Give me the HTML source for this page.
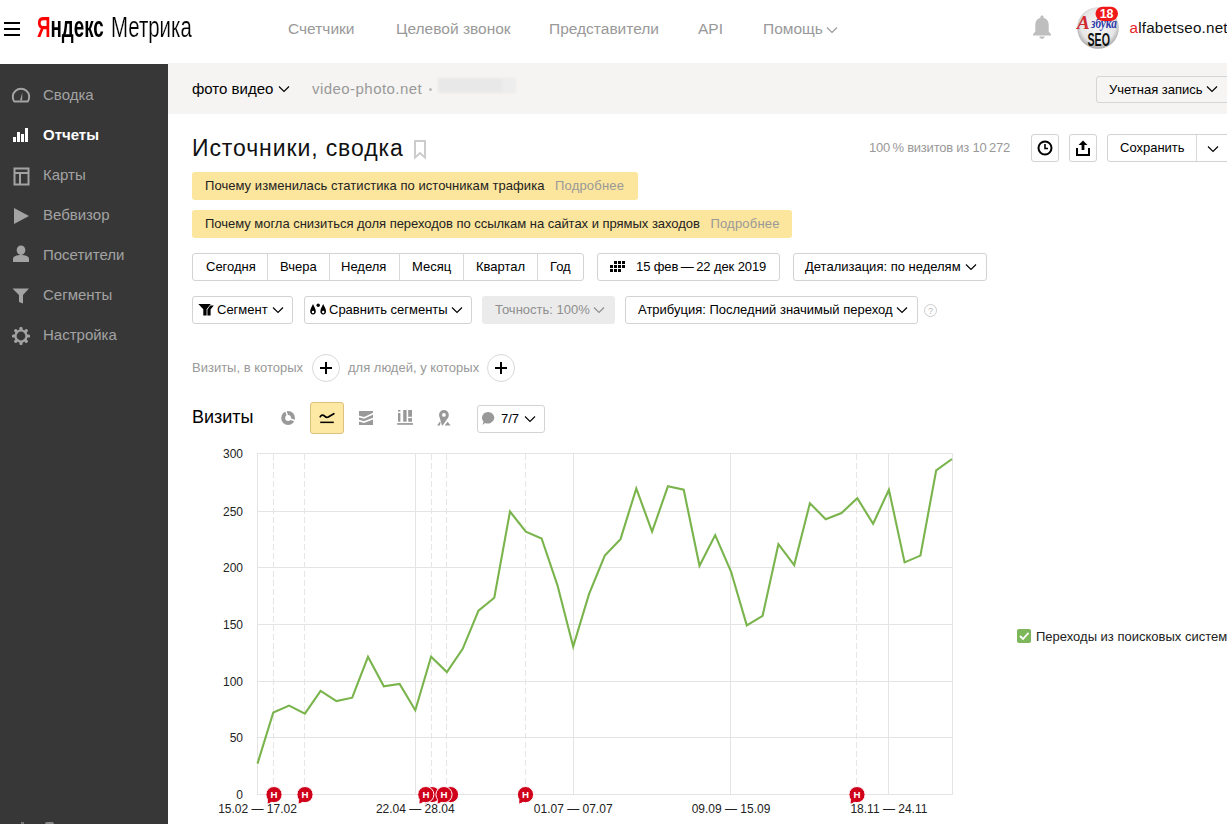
<!DOCTYPE html>
<html><head><meta charset="utf-8">
<style>
*{box-sizing:border-box;margin:0;padding:0}
html,body{width:1227px;height:824px;overflow:hidden;background:#fff;font-family:"Liberation Sans",sans-serif;color:#000}
.a{position:absolute;white-space:nowrap}
#side{position:absolute;left:0;top:64px;width:168px;height:760px;background:#373737}
#band{position:absolute;left:168px;top:63px;width:1059px;height:51px;background:#f5f4f2}
.nav{font-size:15.5px;color:#999;top:20px;letter-spacing:0}
.si{font-size:15px;color:#a3a3a3;left:43px;line-height:17px}
.ban{position:absolute;left:192px;height:28px;background:#fce59c;border-radius:3px;font-size:13px;color:#222;padding-left:13px;line-height:28px;white-space:nowrap;letter-spacing:.05px}
.ban span{color:#999;margin-left:10.5px;letter-spacing:.2px}
.btn{position:absolute;border:1px solid #d3d3d3;border-radius:3px;background:#fff;font-size:13px;color:#000;height:27px;white-space:nowrap}
.t{position:absolute;font-size:13px;line-height:15px;white-space:nowrap}
.chev{position:absolute}
svg{position:absolute;overflow:visible}
</style></head><body>
<!-- header -->
<div class="a" style="left:4px;top:22px;width:16px;height:2px;background:#000"></div>
<div class="a" style="left:4px;top:28px;width:16px;height:2px;background:#000"></div>
<div class="a" style="left:4px;top:34px;width:16px;height:2px;background:#000"></div>
<div class="a" style="left:37px;top:10px;font-size:29px;line-height:34px;font-weight:bold;transform-origin:0 0;transform:scaleX(0.647)"><span style="color:#f00">Я</span>ндекс</div><div class="a" style="left:111px;top:10px;font-size:29px;line-height:34px;transform-origin:0 0;transform:scaleX(0.704);-webkit-text-stroke:0.2px #fff">Метрика</div>
<div class="a nav" style="left:288px">Счетчики</div>
<div class="a nav" style="left:396px">Целевой звонок</div>
<div class="a nav" style="left:549px">Представители</div>
<div class="a nav" style="left:698px">API</div>
<div class="a nav" style="left:763px">Помощь</div>
<svg style="left:826px;top:25.5px" width="12" height="8"><path d="M1 1.5 L6 6.5 L11 1.5" fill="none" stroke="#999" stroke-width="1.15"/></svg>

<!-- bell -->
<svg style="left:1032px;top:14px" width="20" height="26" viewBox="0 0 20 26"><path d="M10 1.5c-1 0-1.6.7-1.6 1.6v.6C5.2 4.5 3.3 7.3 3.3 10.6v6.8L1 20.2v1.3h18v-1.3l-2.3-2.8v-6.8c0-3.3-1.9-6.1-5.1-6.9v-.6c0-.9-.6-1.6-1.6-1.6z" fill="#bebebe"/><path d="M7.2 22.6h5.6c-.3 1.3-1.4 2.3-2.8 2.3s-2.5-1-2.8-2.3z" fill="#bebebe"/></svg>
<!-- avatar -->
<svg style="left:1076px;top:7px" width="44" height="42" viewBox="0 0 44 42">
<defs><radialGradient id="ag" cx="50%" cy="45%" r="55%"><stop offset="0" stop-color="#fafafa"/><stop offset=".75" stop-color="#e6e6e6"/><stop offset="1" stop-color="#a8a8a8"/></radialGradient></defs>
<circle cx="22" cy="21" r="20.8" fill="url(#ag)"/>
<text x="1" y="22" font-family="Liberation Serif" font-style="italic" font-weight="bold" font-size="19" fill="#d02a30">А</text>
<text x="0" y="0" font-family="Liberation Serif" font-style="italic" font-weight="bold" font-size="15" fill="#2c3aa8" transform="translate(15 20.5) scale(0.75 1)">збука</text>
<text x="0" y="0" font-family="Liberation Sans" font-weight="bold" font-size="19" fill="#111" transform="translate(11.5 38.5) scale(0.56 1)">SEO</text>
<rect x="19.5" y="-0.3" width="22.5" height="14.2" rx="7.1" fill="#f01818"/>
<text x="30.6" y="11.3" text-anchor="middle" font-family="Liberation Sans" font-weight="bold" font-size="12.5" fill="#fff">18</text>
</svg>
<div class="a" style="left:1129.5px;top:19px;font-size:15.2px;color:#111;letter-spacing:.2px"><span style="color:#e8232a">a</span>lfabetseo.net</div>

<!-- sidebar -->
<div id="side"></div>
<svg style="left:11px;top:85.5px" width="20" height="17" viewBox="0 0 20 17"><path d="M3.2 15.5 A8.2 8.2 0 1 1 16.8 15.5 Z" fill="none" stroke="#a3a3a3" stroke-width="2" stroke-linejoin="round"/><path d="M9 14.5 L11.3 6.5 L11.2 14.5Z" fill="#a3a3a3"/></svg>
<div class="a si" style="top:86px">Сводка</div>
<svg style="left:13px;top:128px" width="16" height="14"><rect x="0" y="9" width="3" height="5" fill="#fff"/><rect x="4" y="4" width="3" height="10" fill="#fff"/><rect x="8" y="6" width="3" height="8" fill="#fff"/><rect x="12" y="0" width="3" height="14" fill="#fff"/></svg>
<div class="a si" style="top:126px;color:#fff;font-weight:bold">Отчеты</div>
<svg style="left:12.5px;top:166.5px" width="18" height="20"><rect x="1.5" y="1.5" width="14" height="16" fill="none" stroke="#a3a3a3" stroke-width="2"/><rect x="2" y="5" width="13" height="2" fill="#a3a3a3"/><rect x="6" y="6" width="2" height="11" fill="#a3a3a3"/></svg>
<div class="a si" style="top:166px">Карты</div>
<svg style="left:13px;top:207px" width="17" height="18"><path d="M1 1 L16 9 L1 17Z" fill="#a3a3a3"/></svg>
<div class="a si" style="top:206px">Вебвизор</div>
<svg style="left:13px;top:245px" width="17" height="18"><ellipse cx="8" cy="5.2" rx="4.3" ry="4.8" fill="#a3a3a3"/><path d="M0 17 L0 14 C0 11 4 10 8 10 C12 10 16 11 16 14 L16 17Z" fill="#a3a3a3"/></svg>
<div class="a si" style="top:246px">Посетители</div>
<svg style="left:12px;top:288px" width="18" height="16"><path d="M0.5 0.5 L17 0.5 L11 7 L11 15.5 L7 14 L7 7Z" fill="#a3a3a3"/></svg>
<div class="a si" style="top:286px">Сегменты</div>
<svg style="left:11px;top:326px" width="20" height="20" viewBox="0 0 20 20"><g fill="#a3a3a3"><circle cx="10" cy="10" r="6.6"/><g id="tooth"><rect x="8.4" y="1" width="3.2" height="3.6" rx="1.2"/></g><use href="#tooth" transform="rotate(45 10 10)"/><use href="#tooth" transform="rotate(90 10 10)"/><use href="#tooth" transform="rotate(135 10 10)"/><use href="#tooth" transform="rotate(180 10 10)"/><use href="#tooth" transform="rotate(225 10 10)"/><use href="#tooth" transform="rotate(270 10 10)"/><use href="#tooth" transform="rotate(315 10 10)"/></g><circle cx="10" cy="10" r="4.4" fill="#373737"/></svg>
<div class="a si" style="top:326px">Настройка</div>

<div class="a" style="left:21px;top:822px;width:3px;height:2px;background:#777"></div><div class="a" style="left:45px;top:822px;width:9px;height:2px;background:#888;border-radius:3px 3px 0 0"></div>
<!-- band -->
<div id="band"></div>
<div class="a" style="left:192px;top:80px;font-size:15px;color:#000">фото видео</div>
<svg style="left:278px;top:85px" width="12" height="8"><path d="M1 1.5 L6 6.5 L11 1.5" fill="none" stroke="#000" stroke-width="1.15"/></svg>
<div class="a" style="left:312px;top:80px;font-size:15px;color:#999;letter-spacing:.45px">video-photo.net</div>
<div class="a" style="left:429px;top:88px;width:3px;height:3px;border-radius:2px;background:#bbb"></div>
<div class="a" style="left:438px;top:78px;width:78px;height:15px;background:#ededed;filter:blur(1.2px)"></div><div class="a" style="left:439px;top:79px;width:63px;height:13px;background:#e8e8e8;filter:blur(1px)"></div>
<div class="btn" style="left:1096px;top:76px;width:140px;background:#f6f5f3;border-color:#d5d5d5"></div>
<div class="t" style="left:1109px;top:82px">Учетная запись</div>
<svg style="left:1206px;top:85px" width="12" height="8"><path d="M1 1.5 L6 6.5 L11 1.5" fill="none" stroke="#000" stroke-width="1.15"/></svg>

<!-- title -->
<div class="a" style="left:192px;top:135px;font-size:23px;letter-spacing:.9px;color:#111">Источники, сводка</div>
<svg style="left:413px;top:140px" width="14" height="20"><path d="M2 1 L12 1 L12 17.5 L7 13 L2 17.5Z" fill="none" stroke="#ccc" stroke-width="2"/></svg>
<div class="t" style="left:869px;top:140px;color:#999;letter-spacing:-.22px">100&#8201;% визитов из 10&#8201;272</div>
<div class="btn" style="left:1031px;top:134px;width:28px;height:28px"></div>
<svg style="left:1036px;top:139px" width="18" height="18" viewBox="0 0 18 18"><circle cx="9" cy="9" r="6.5" fill="none" stroke="#000" stroke-width="2"/><path d="M9 5 L9 9.5 L12 9.5" fill="none" stroke="#000" stroke-width="1.6"/></svg>
<div class="btn" style="left:1069px;top:134px;width:28px;height:28px"></div>
<svg style="left:1074px;top:139px" width="18" height="18" viewBox="0 0 18 18"><path d="M9 1.5 L4.5 6 L7.6 6 L7.6 11 L10.4 11 L10.4 6 L13.5 6Z" fill="#000"/><path d="M3 9 L3 16 L15 16 L15 9" fill="none" stroke="#000" stroke-width="2"/></svg>
<div class="btn" style="left:1107px;top:134px;width:130px;height:28px"></div>
<div class="a" style="left:1196px;top:135px;width:1px;height:26px;background:#d9d9d9"></div>
<div class="t" style="left:1120px;top:139.5px">Сохранить</div>
<svg style="left:1206.5px;top:145px" width="12" height="8"><path d="M1 1.5 L6 6.5 L11 1.5" fill="none" stroke="#000" stroke-width="1.15"/></svg>

<div class="ban" style="top:172px;width:446px">Почему изменилась статистика по источникам трафика<span>Подробнее</span></div>
<div class="ban" style="top:210px;width:600px;letter-spacing:-.025px">Почему могла снизиться доля переходов по ссылкам на сайтах и прямых заходов<span>Подробнее</span></div>

<div class="btn" style="left:192px;top:253px;width:392px;height:28px"></div>
<div class="a" style="left:267px;top:254px;width:1px;height:26px;background:#d9d9d9"></div>
<div class="a" style="left:329px;top:254px;width:1px;height:26px;background:#d9d9d9"></div>
<div class="a" style="left:399px;top:254px;width:1px;height:26px;background:#d9d9d9"></div>
<div class="a" style="left:463px;top:254px;width:1px;height:26px;background:#d9d9d9"></div>
<div class="a" style="left:537px;top:254px;width:1px;height:26px;background:#d9d9d9"></div>
<div class="t" style="left:206px;top:259px">Сегодня</div>
<div class="t" style="left:280px;top:259px">Вчера</div>
<div class="t" style="left:341px;top:259px">Неделя</div>
<div class="t" style="left:412px;top:259px">Месяц</div>
<div class="t" style="left:476px;top:259px">Квартал</div>
<div class="t" style="left:550px;top:259px">Год</div>
<div class="btn" style="left:597px;top:253px;width:183px;height:28px"></div>
<svg style="left:610px;top:261px" width="16" height="12"><g fill="#000"><rect x="4" y="0" width="3" height="3"/><rect x="8" y="0" width="3" height="3"/><rect x="12" y="0" width="3" height="3"/><rect x="0" y="4" width="3" height="3"/><rect x="4" y="4" width="3" height="3"/><rect x="8" y="4" width="3" height="3"/><rect x="12" y="4" width="3" height="3"/><rect x="0" y="8" width="3" height="3"/><rect x="4" y="8" width="3" height="3"/><rect x="8" y="8" width="3" height="3"/></g></svg>
<div class="t" style="left:636px;top:259px;letter-spacing:-.1px">15 фев&#8201;—&#8201;22 дек 2019</div>
<div class="btn" style="left:793px;top:253px;width:194px;height:28px"></div>
<div class="t" style="left:805px;top:259px">Детализация: по неделям</div>
<svg style="left:965px;top:263px" width="12" height="8"><path d="M1 1.5 L6 6.5 L11 1.5" fill="none" stroke="#000" stroke-width="1.15"/></svg>
<div class="btn" style="left:192px;top:296px;width:101px;height:28px"></div>
<svg style="left:198px;top:304px" width="17" height="13"><path d="M0.3 0 L12.8 0 L8.6 5.3 L8.6 11.6 L5.3 11.6 L5.3 5.3Z" fill="#000"/><path d="M12.3 1.6 L15.8 1.6 L12.6 5.6 L12.6 11.6 L9.4 11.6 L9.4 5.4Z" fill="#000"/></svg>
<div class="t" style="left:217px;top:302px">Сегмент</div>
<svg style="left:271.5px;top:306px" width="12" height="8"><path d="M1 1.5 L6 6.5 L11 1.5" fill="none" stroke="#000" stroke-width="1.15"/></svg>
<div class="btn" style="left:304px;top:296px;width:168px;height:28px"></div>
<svg style="left:310px;top:303px" width="17" height="14"><path d="M3 1 C1.8 3.8 0.2 5.8 0.2 8.6 A2.8 2.8 0 0 0 5.8 8.6 C5.8 5.8 4.2 3.8 3 1Z" fill="#000"/><circle cx="3" cy="9" r="1.2" fill="#fff"/><path d="M13.2 1 C12.0 3.8 10.399999999999999 5.8 10.399999999999999 8.6 A2.8 2.8 0 0 0 16.0 8.6 C16.0 5.8 14.399999999999999 3.8 13.2 1Z" fill="#000"/><circle cx="13.2" cy="9" r="1.2" fill="#fff"/><circle cx="8.2" cy="2.2" r="1.7" fill="#000"/></svg>
<div class="t" style="left:329px;top:302px">Сравнить сегменты</div>
<svg style="left:451px;top:306px" width="12" height="8"><path d="M1 1.5 L6 6.5 L11 1.5" fill="none" stroke="#000" stroke-width="1.15"/></svg>
<div class="a" style="left:482px;top:296px;width:133px;height:28px;background:#ebebeb;border-radius:3px"></div>
<div class="t" style="left:495px;top:302px;color:#8e8e8e">Точность: 100%</div>
<svg style="left:593px;top:306px" width="12" height="8"><path d="M1 1.5 L6 6.5 L11 1.5" fill="none" stroke="#8e8e8e" stroke-width="1.15"/></svg>
<div class="btn" style="left:625px;top:296px;width:293px;height:28px"></div>
<div class="t" style="left:638px;top:302px">Атрибуция: Последний значимый переход</div>
<svg style="left:896px;top:306px" width="12" height="8"><path d="M1 1.5 L6 6.5 L11 1.5" fill="none" stroke="#000" stroke-width="1.15"/></svg>
<svg style="left:923px;top:303px" width="15" height="15"><circle cx="7.5" cy="7.5" r="6" fill="none" stroke="#ccc" stroke-width="1"/><text x="7.5" y="11" text-anchor="middle" font-family="Liberation Sans" font-size="9" fill="#bbb">?</text></svg>
<div class="t" style="left:192px;top:360px;color:#999">Визиты, в которых</div>
<div class="a" style="left:312px;top:354px;width:28px;height:28px;border:1px solid #d9d9d9;border-radius:50%"></div>
<div class="a" style="left:320px;top:367px;width:12px;height:2px;background:#000"></div>
<div class="a" style="left:325px;top:362px;width:2px;height:12px;background:#000"></div>
<div class="a" style="left:487px;top:354px;width:28px;height:28px;border:1px solid #d9d9d9;border-radius:50%"></div>
<div class="a" style="left:495px;top:367px;width:12px;height:2px;background:#000"></div>
<div class="a" style="left:500px;top:362px;width:2px;height:12px;background:#000"></div>
<div class="t" style="left:348px;top:360px;color:#999">для людей, у которых</div>
<div class="a" style="left:192px;top:407px;font-size:18px;color:#000">Визиты</div>
<svg style="left:275px;top:404px" width="26" height="26" viewBox="275 404 26 26"><circle cx="288.1" cy="418" r="6.9" fill="#999"/><circle cx="288.1" cy="418" r="2.9" fill="#fff"/><path d="M288.1 418 L285.6 410" stroke="#fff" stroke-width="1.5"/><path d="M288.1 418 L296 421.2" stroke="#fff" stroke-width="1.5"/></svg>
<div class="a" style="left:310px;top:402px;width:34px;height:32px;background:#fde8a4;border:1px solid #dcc27c;border-radius:3px"></div>
<svg style="left:310px;top:402px" width="34" height="32" viewBox="310 402 34 32"><path d="M320.3 416.6 C321.3 414.8 322.8 414.6 324.3 415.8 C325.8 417.3 326.8 418 328.3 417.1 L333.8 413.8" fill="none" stroke="#000" stroke-width="1.8" stroke-linecap="round"/><rect x="320.2" y="421.6" width="13.6" height="1.5" fill="#000"/></svg>
<svg style="left:355px;top:406px" width="22" height="22" viewBox="355 406 22 22"><rect x="359" y="411" width="14" height="14" fill="#999"/><path d="M358 416.2 L364 417.9 L374 413.2" fill="none" stroke="#fff" stroke-width="1.7"/><path d="M358 420.4 L364 422 L374 418.3" fill="none" stroke="#fff" stroke-width="1.7"/></svg>
<svg style="left:395px;top:406px" width="22" height="22" viewBox="395 406 22 22"><g fill="#999"><rect x="398" y="410" width="2.4" height="1.6"/><rect x="398" y="413" width="2.4" height="8.7"/><rect x="403.2" y="410" width="3.4" height="11.7"/><rect x="408.2" y="410" width="3.8" height="6.8"/><rect x="408.2" y="418.1" width="3.8" height="3.6"/><rect x="397.2" y="423.1" width="15.8" height="1.7"/></g></svg>
<svg style="left:433px;top:406px" width="22" height="22" viewBox="433 406 22 22"><g fill="#999"><circle cx="443.9" cy="414.9" r="4.9"/><path d="M439.6 417.2 L448.4 417.2 L442.6 425.4 L441.9 425.4Z"/><path d="M437.1 425.6 L439.5 421.9 L440.6 421.9 L439.9 425.6Z"/><path d="M444.6 425.6 L447.6 421.8 L450.7 425.6Z"/></g><circle cx="443.9" cy="414.9" r="1.9" fill="#fff"/></svg>
<div class="btn" style="left:477px;top:405px;width:68px;height:28px"></div>
<svg style="left:481px;top:411px" width="15" height="15"><path d="M7.5 1 A6.5 5.8 0 1 1 4 12 L1.5 14 L2.5 10.5 A6.5 5.8 0 0 1 7.5 1Z" fill="#999"/></svg>
<div class="t" style="left:501px;top:411px">7/7</div>
<svg style="left:524px;top:415px" width="12" height="8"><path d="M1 1.5 L6 6.5 L11 1.5" fill="none" stroke="#000" stroke-width="1.1"/></svg>
<svg id="chart" style="left:0;top:0" width="1227" height="824">
<line x1="257" y1="794.5" x2="953" y2="794.5" stroke="#e4e4e4" stroke-width="1"/>
<text x="243" y="798.8" text-anchor="end" font-family="Liberation Sans" font-size="12" fill="#222">0</text>
<line x1="257" y1="737.5" x2="953" y2="737.5" stroke="#e4e4e4" stroke-width="1"/>
<text x="243" y="741.8" text-anchor="end" font-family="Liberation Sans" font-size="12" fill="#222">50</text>
<line x1="257" y1="681.5" x2="953" y2="681.5" stroke="#e4e4e4" stroke-width="1"/>
<text x="243" y="685.8" text-anchor="end" font-family="Liberation Sans" font-size="12" fill="#222">100</text>
<line x1="257" y1="624.5" x2="953" y2="624.5" stroke="#e4e4e4" stroke-width="1"/>
<text x="243" y="628.8" text-anchor="end" font-family="Liberation Sans" font-size="12" fill="#222">150</text>
<line x1="257" y1="567.5" x2="953" y2="567.5" stroke="#e4e4e4" stroke-width="1"/>
<text x="243" y="571.8" text-anchor="end" font-family="Liberation Sans" font-size="12" fill="#222">200</text>
<line x1="257" y1="511.5" x2="953" y2="511.5" stroke="#e4e4e4" stroke-width="1"/>
<text x="243" y="515.8" text-anchor="end" font-family="Liberation Sans" font-size="12" fill="#222">250</text>
<line x1="257" y1="453.5" x2="953" y2="453.5" stroke="#e4e4e4" stroke-width="1"/>
<text x="243" y="457.8" text-anchor="end" font-family="Liberation Sans" font-size="12" fill="#222">300</text>
<line x1="257.5" y1="453.5" x2="257.5" y2="794" stroke="#e4e4e4" stroke-width="1"/>
<line x1="415.5" y1="453.5" x2="415.5" y2="794" stroke="#e4e4e4" stroke-width="1"/>
<line x1="573.5" y1="453.5" x2="573.5" y2="794" stroke="#e4e4e4" stroke-width="1"/>
<line x1="730.5" y1="453.5" x2="730.5" y2="794" stroke="#e4e4e4" stroke-width="1"/>
<line x1="888.5" y1="453.5" x2="888.5" y2="794" stroke="#e4e4e4" stroke-width="1"/>
<line x1="952.5" y1="453.5" x2="952.5" y2="794" stroke="#e4e4e4" stroke-width="1"/>
<line x1="273.5" y1="454" x2="273.5" y2="794" stroke="#e6e6e6" stroke-width="1" stroke-dasharray="6,3"/>
<line x1="304.5" y1="454" x2="304.5" y2="794" stroke="#e6e6e6" stroke-width="1" stroke-dasharray="6,3"/>
<line x1="431.5" y1="454" x2="431.5" y2="794" stroke="#e6e6e6" stroke-width="1" stroke-dasharray="6,3"/>
<line x1="446.5" y1="454" x2="446.5" y2="794" stroke="#e6e6e6" stroke-width="1" stroke-dasharray="6,3"/>
<line x1="525.5" y1="454" x2="525.5" y2="794" stroke="#e6e6e6" stroke-width="1" stroke-dasharray="6,3"/>
<line x1="856.5" y1="454" x2="856.5" y2="794" stroke="#e6e6e6" stroke-width="1" stroke-dasharray="6,3"/>
<polyline points="257.5,763.6 273.3,712.5 289.1,705.6 304.9,713.6 320.6,690.9 336.4,701.1 352.2,697.7 368.0,656.8 383.8,686.3 399.6,684.0 415.3,710.2 431.1,656.8 446.9,672.1 462.7,648.8 478.5,610.6 494.3,597.7 510.0,511.5 525.8,531.7 541.6,538.5 557.4,585.1 573.2,646.5 589.0,594.2 604.8,555.6 620.5,539.1 636.3,488.5 652.1,531.7 667.9,486.3 683.7,489.7 699.5,565.8 715.2,535.1 731.0,571.5 746.8,625.4 762.6,615.8 778.4,544.2 794.2,565.1 809.9,503.3 825.7,519.2 841.5,513.0 857.3,498.2 873.1,523.8 888.9,489.7 904.6,562.4 920.4,555.6 936.2,470.3 952.0,459.0" fill="none" stroke="#7ab44c" stroke-width="2.1" stroke-linejoin="miter"/>
<text x="257.5" y="813" text-anchor="middle" font-family="Liberation Sans" font-size="12" fill="#222">15.02 — 17.02</text>
<text x="415.3" y="813" text-anchor="middle" font-family="Liberation Sans" font-size="12" fill="#222">22.04 — 28.04</text>
<text x="573.2" y="813" text-anchor="middle" font-family="Liberation Sans" font-size="12" fill="#222">01.07 — 07.07</text>
<text x="731.0" y="813" text-anchor="middle" font-family="Liberation Sans" font-size="12" fill="#222">09.09 — 15.09</text>
<text x="888.9" y="813" text-anchor="middle" font-family="Liberation Sans" font-size="12" fill="#222">18.11 — 24.11</text>
<g><path d="M268.5,798.6 L267.7,804.2 L273.5,801.4Z" fill="#d0021b" stroke="#fff" stroke-width="1"/><circle cx="274" cy="794.6" r="8.1" fill="#d0021b" stroke="#fff" stroke-width="1"/><path d="M268,797.9 L267.7,803.6 L272.8,800.9Z" fill="#d0021b"/><text x="274.1" y="797.7" text-anchor="middle" font-family="Liberation Sans" font-weight="bold" font-size="9" fill="#fff" transform="translate(274 0) scale(1.08 1) translate(-274 0)">Н</text></g>
<g><path d="M299.5,798.6 L298.7,804.2 L304.5,801.4Z" fill="#d0021b" stroke="#fff" stroke-width="1"/><circle cx="305" cy="794.6" r="8.1" fill="#d0021b" stroke="#fff" stroke-width="1"/><path d="M299,797.9 L298.7,803.6 L303.8,800.9Z" fill="#d0021b"/><text x="305.1" y="797.7" text-anchor="middle" font-family="Liberation Sans" font-weight="bold" font-size="9" fill="#fff" transform="translate(305 0) scale(1.08 1) translate(-305 0)">Н</text></g>
<g><path d="M426.5,798.6 L425.7,804.2 L431.5,801.4Z" fill="#d0021b" stroke="#fff" stroke-width="1"/><circle cx="432" cy="794.6" r="8.1" fill="#d0021b" stroke="#fff" stroke-width="1"/><path d="M426,797.9 L425.7,803.6 L430.8,800.9Z" fill="#d0021b"/></g>
<g><path d="M445.0,798.6 L444.2,804.2 L450.0,801.4Z" fill="#d0021b" stroke="#fff" stroke-width="1"/><circle cx="450.5" cy="794.6" r="8.1" fill="#d0021b" stroke="#fff" stroke-width="1"/><path d="M444.5,797.9 L444.2,803.6 L449.3,800.9Z" fill="#d0021b"/></g>
<g><path d="M420.3,798.6 L419.5,804.2 L425.3,801.4Z" fill="#d0021b" stroke="#fff" stroke-width="1"/><circle cx="425.8" cy="794.6" r="8.1" fill="#d0021b" stroke="#fff" stroke-width="1"/><path d="M419.8,797.9 L419.5,803.6 L424.6,800.9Z" fill="#d0021b"/><text x="425.90000000000003" y="797.7" text-anchor="middle" font-family="Liberation Sans" font-weight="bold" font-size="9" fill="#fff" transform="translate(425.8 0) scale(1.08 1) translate(-425.8 0)">Н</text></g>
<g><path d="M438.5,798.6 L437.7,804.2 L443.5,801.4Z" fill="#d0021b" stroke="#fff" stroke-width="1"/><circle cx="444" cy="794.6" r="8.1" fill="#d0021b" stroke="#fff" stroke-width="1"/><path d="M438,797.9 L437.7,803.6 L442.8,800.9Z" fill="#d0021b"/><text x="444.1" y="797.7" text-anchor="middle" font-family="Liberation Sans" font-weight="bold" font-size="9" fill="#fff" transform="translate(444 0) scale(1.08 1) translate(-444 0)">Н</text></g>
<g><path d="M520.0,798.6 L519.2,804.2 L525.0,801.4Z" fill="#d0021b" stroke="#fff" stroke-width="1"/><circle cx="525.5" cy="794.6" r="8.1" fill="#d0021b" stroke="#fff" stroke-width="1"/><path d="M519.5,797.9 L519.2,803.6 L524.3,800.9Z" fill="#d0021b"/><text x="525.6" y="797.7" text-anchor="middle" font-family="Liberation Sans" font-weight="bold" font-size="9" fill="#fff" transform="translate(525.5 0) scale(1.08 1) translate(-525.5 0)">Н</text></g>
<g><path d="M851.5,798.6 L850.7,804.2 L856.5,801.4Z" fill="#d0021b" stroke="#fff" stroke-width="1"/><circle cx="857" cy="794.6" r="8.1" fill="#d0021b" stroke="#fff" stroke-width="1"/><path d="M851,797.9 L850.7,803.6 L855.8,800.9Z" fill="#d0021b"/><text x="857.1" y="797.7" text-anchor="middle" font-family="Liberation Sans" font-weight="bold" font-size="9" fill="#fff" transform="translate(857 0) scale(1.08 1) translate(-857 0)">Н</text></g>
</svg>
<div class="a" style="left:1017px;top:629px;width:14px;height:14px;background:#7cb85a;border-radius:2px"></div><svg style="left:1017px;top:629px" width="14" height="14"><path d="M3 7 L6 10 L11.5 3.8" fill="none" stroke="#fff" stroke-width="1.8"/></svg><div class="t" style="left:1036px;top:629px;color:#222">Переходы из поисковых систем</div>
</body></html>
